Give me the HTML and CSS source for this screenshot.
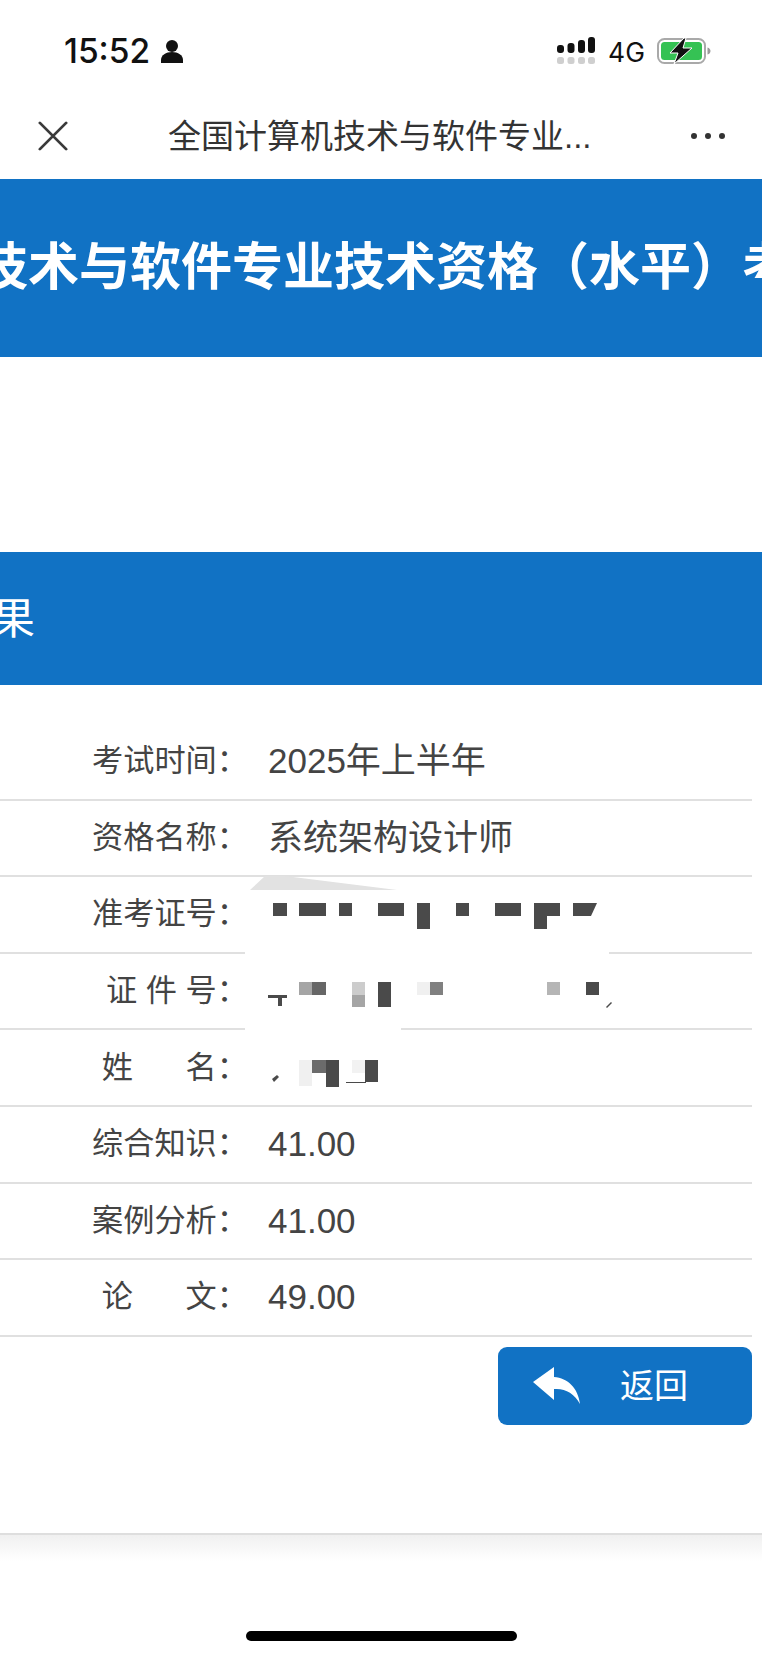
FILE: index.html
```html
<!DOCTYPE html>
<html lang="zh-CN">
<head>
<meta charset="utf-8">
<title>全国计算机技术与软件专业技术资格（水平）考试</title>
<link rel="stylesheet" href="styles.css">
</head>
<body>
<div class="page">
  <header class="status">
    <div class="status-left">
      <span class="time">15:52</span>
      <svg class="person" viewBox="0 0 22 23"><circle cx="11" cy="6" r="6"/><path d="M0 23v-3c0-5 5-8 11-8s11 3 11 8v3z"/></svg>
    </div>
    <div class="status-right">
      <svg class="signal" viewBox="0 0 38 27">
        <rect x="0" y="8" width="7" height="8" rx="3"/><rect x="10.500" y="6" width="7" height="10" rx="3"/><rect x="21" y="3" width="7" height="13" rx="3"/><rect x="31" y="0" width="7" height="16" rx="3"/>
        <g class="signal-off"><rect x="0" y="20" width="7" height="7" rx="2.500"/><rect x="10.500" y="20" width="7" height="7" rx="2.500"/><rect x="21" y="20" width="7" height="7" rx="2.500"/><rect x="31" y="20" width="7" height="7" rx="2.500"/></g>
      </svg>
      <span class="net">4G</span>
      <svg class="battery" viewBox="0 0 54 26">
        <rect class="batt-shell" x="1" y="1" width="47" height="24" rx="6.500"/>
        <rect class="batt-fill" x="4" y="4" width="41" height="18" rx="3.500"/>
        <path class="batt-nub" d="M50.500 9.500c2 .6 3 2 3 3.500s-1 3-3 3.500z"/>
        <path class="batt-bolt" d="M27 0 13 15h8l-4 11 18-16h-9l3-10z"/>
      </svg>
    </div>
  </header>
  <nav class="nav">
    <svg class="close" viewBox="0 0 32 32"><path d="M2 2l28 28M30 2 2 30"/></svg>
    <div class="nav-title">全国计算机技术与软件专业...</div>
    <svg class="more" viewBox="0 0 34 6"><circle cx="3" cy="3" r="3"/><circle cx="17" cy="3" r="3"/><circle cx="31" cy="3" r="3"/></svg>
  </nav>
  <section class="banner">
    <h1 class="banner-text">全国计算机技术与软件专业技术资格（水平）考试</h1>
  </section>
  <section class="subbar">
    <h2 class="subbar-text">查询结果</h2>
  </section>
  <div class="rows">
    <div class="row"><span class="label">考试时间：</span><span class="value">2025年上半年</span></div>
    <div class="row"><span class="label">资格名称：</span><span class="value">系统架构设计师</span></div>
    <div class="row"><span class="label">准考证号：</span><span class="value"></span></div>
    <div class="row"><span class="label wide1">证 件 号：</span><span class="value"></span></div>
    <div class="row"><span class="label wide2">姓 名：</span><span class="value"></span></div>
    <div class="row"><span class="label">综合知识：</span><span class="value">41.00</span></div>
    <div class="row"><span class="label">案例分析：</span><span class="value">41.00</span></div>
    <div class="row"><span class="label wide2">论 文：</span><span class="value">49.00</span></div>
  </div>
  <div class="actions">
    <button class="back">
      <svg class="back-icon" viewBox="0 0 48 37"><path d="M21 0v10c14 1 24 11 26 27C41 26 32 21 21 22v11L0 15z"/></svg>
      <span class="back-text">返回</span>
    </button>
  </div>
  <footer class="foot"><div class="home-bar"></div></footer>
  <svg class="mosaic" viewBox="0 0 762 1657" aria-hidden="true">
    <rect class="m-w" x="245" y="945" width="364" height="16"/>
    <rect class="m-w" x="245" y="1022" width="156" height="16"/>
    <path class="m-wedge" d="M250 890l15-14h20l112 14z"/>
    <g class="m-d">
      <rect x="273" y="903" width="14" height="13"/><rect x="299" y="903" width="27" height="13"/><rect x="339" y="903" width="13" height="13"/><rect x="378" y="903" width="26" height="13"/><rect x="417" y="903" width="13" height="26"/><rect x="456" y="903" width="13" height="13"/><rect x="495" y="903" width="26" height="13"/><path d="M534 903h26v13h-13v13h-13z"/><path d="M573 916v-13h24l-6 13z"/>
      <rect x="378" y="982" width="13" height="25"/><rect x="586" y="982" width="13" height="13"/>
      <rect x="326" y="1060" width="13" height="27"/><rect x="365" y="1060" width="13" height="22"/>
      <path d="M268 995h19v3h-5v8h-4v-8h-10z"/><path d="M272 1079l5-4 2 2-5 5z"/><path d="M346 1082h20v1h-20z"/><path d="M611 1002l-5 5 1 1 5-5z"/>
    </g>
    <rect x="299" y="982" width="13" height="13" fill="#a5a5a5"/><rect x="312" y="982" width="14" height="13" fill="#666"/>
    <rect x="352" y="982" width="13" height="13" fill="#ccc"/><rect x="352" y="995" width="13" height="12" fill="#a5a5a5"/>
    <rect x="417" y="982" width="13" height="13" fill="#f0f0f0"/><rect x="430" y="982" width="13" height="13" fill="#808080"/>
    <rect x="547" y="982" width="13" height="13" fill="#b5b5b5"/>
    <rect x="299" y="1060" width="13" height="26" fill="#f0f0f0"/><rect x="312" y="1060" width="14" height="13" fill="#6b6b6b"/>
    <rect x="352" y="1060" width="13" height="13" fill="#f2f2f2"/>
  </svg>
</div>
</body>
</html>
```
FILE: styles.css
```css
* { box-sizing: border-box; }
html, body { margin: 0; padding: 0; background: #fff; }
.page {
  position: relative;
  width: 762px;
  height: 1657px;
  overflow: hidden;
  display: flex;
  flex-direction: column;
  font-family: "Liberation Sans", "Noto Sans CJK SC", sans-serif;
  color: #444;
}
.status {
  height: 95px;
  flex: none;
  display: flex;
  justify-content: space-between;
  padding: 35px 51px 0 64px;
}
.status-left { display: flex; align-items: flex-start; gap: 11px; }
.time { font-family: Inter, sans-serif; font-weight: 500; font-size: 33.500px; line-height: 32px; color: #111; }
.person { width: 22px; height: 23px; margin-top: 5px; fill: #111; }
.status-right { display: flex; align-items: flex-start; }
.signal { width: 38px; height: 27px; margin-top: 2px; fill: #111; }
.signal-off { fill: #cfcfcf; }
.net { font-family: Inter, sans-serif; font-size: 26.500px; line-height: 26px; margin: 4px 0 0 13px; color: #111; }
.battery { width: 54px; height: 26px; margin: 3px 0 0 12px; }
.batt-shell { fill: none; stroke: #a9a9a9; stroke-width: 2; }
.batt-fill { fill: #35c254; }
.batt-nub { fill: #9a9a9a; }
.batt-bolt { fill: #111; stroke: #fff; stroke-width: 1; }
.nav {
  height: 84px;
  flex: none;
  display: flex;
  align-items: center;
  padding: 0 38px;
  color: #333;
}
.close { width: 30px; height: 30px; fill: none; stroke: #3a3a3a; stroke-width: 3; stroke-linecap: round; flex: none; margin-top: -2px; }
.nav-title { flex: 1; font-size: 33px; line-height: 40px; padding-left: 100px; white-space: nowrap; }
.more { width: 34px; height: 6px; fill: #333; flex: none; margin: -2px -1px 0 0; }
.banner {
  height: 178px;
  flex: none;
  background: #1172c4;
  display: flex;
  align-items: center;
  overflow: hidden;
}
.banner-text {
  margin: 0 0 0 -278px;
  font-size: 51px;
  line-height: 60px;
  font-weight: 700;
  color: #fff;
  white-space: nowrap;
}
.subbar {
  height: 133px;
  margin-top: 195px;
  flex: none;
  background: #1172c4;
  display: flex;
  align-items: center;
  overflow: hidden;
}
.subbar-text {
  margin: 0 0 0 -137px;
  font-size: 43px;
  line-height: 50px;
  font-weight: 400;
  color: #fff;
  white-space: nowrap;
}
.rows { margin-top: 39px; width: 752px; flex: none; }
.row {
  height: 76.600px;
  border-bottom: 2px solid #e0e0e0;
  display: flex;
  align-items: center;
}
.label {
  width: 248px;
  flex: none;
  text-align: right;
  font-size: 31.200px;
  line-height: 40px;
  color: #444;
  white-space: pre;
}
.wide1 { word-spacing: 0; }
.wide2 { word-spacing: 44px; }
.value { padding-left: 20px; font-size: 35px; line-height: 40px; color: #444; }
.actions { display: flex; justify-content: flex-end; width: 752px; margin-top: 10px; flex: none; }
.back {
  width: 254px;
  height: 78px;
  border: 0;
  border-radius: 9px;
  background: #1172c4;
  padding: 0 0 0 35px;
  display: flex;
  align-items: center;
  font-family: inherit;
  color: #fff;
}
.back-icon { width: 48px; height: 37px; fill: #fff; flex: none; }
.back-text { font-size: 34px; line-height: 40px; margin-left: 39px; }
.foot {
  position: relative;
  margin-top: 108px;
  flex: 1;
  border-top: 2px solid #dedede;
  background: linear-gradient(#f0f0f0, #fff 26px);
  display: flex;
  justify-content: center;
}
.home-bar { width: 271px; height: 10px; margin-top: 96px; background: #000; border-radius: 5px; }
.mosaic { position: absolute; left: 0; top: 0; width: 762px; height: 1657px; pointer-events: none; }
.m-w { fill: #fff; }
.m-wedge { fill: #e2e2e2; }
.m-d { fill: #4a4a4a; }
```
